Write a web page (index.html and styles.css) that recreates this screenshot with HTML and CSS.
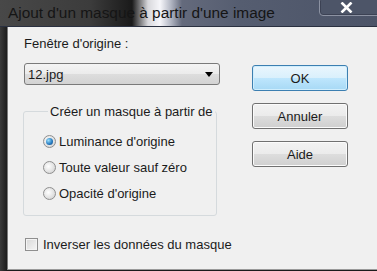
FILE: index.html
```html
<!DOCTYPE html>
<html>
  <head>
    <title>Ajout d'un masque</title>
    <link rel="stylesheet" href="styles.css">
  </head>
  <body>
    <div class="window">
      <div class="titlebar">
        <span class="title-text">Ajout d'un masque à partir d'une image</span>
        <div class="close-btn">
          <svg width="13" height="11" viewBox="0 0 13 11">
            <path d="M1.5 0.5 L11.5 10.5 M11.5 0.5 L1.5 10.5" stroke="#fff" stroke-width="2.6" />
          </svg>
        </div>
      </div>

      <div class="frame">
        <div class="client">
          <div class="left-col">
            <div class="label">Fenêtre d'origine :</div>
            <div class="select">
              <span>12.jpg</span>
              <span class="arrow"></span>
            </div>

            <fieldset class="group">
              <legend>Créer un masque à partir de</legend>
              <div class="radio-row">
                <span class="radio checked"></span>
                <span>Luminance d'origine</span>
              </div>
              <div class="radio-row">
                <span class="radio"></span>
                <span>Toute valeur sauf zéro</span>
              </div>
              <div class="radio-row">
                <span class="radio"></span>
                <span>Opacité d'origine</span>
              </div>
            </fieldset>

            <div class="check-row">
              <span class="checkbox"></span>
              <span>Inverser les données du masque</span>
            </div>
          </div>

          <div class="right-col">
            <button class="button primary">OK</button>
            <button class="button">Annuler</button>
            <button class="button">Aide</button>
          </div>
        </div>
      </div>
    </div>
  </body>
</html>
```

FILE: styles.css
```css
:root {
  --client-bg: #f0f0f0;
  --text: #1b1b1b;
  --frame-dark: #2c2c2c;
}

body {
  margin: 0;
  font-family: 'Liberation Sans', Arial, sans-serif;
  background: #1f2430;
}

.window {
  width: 377px;
  height: 271px;
  overflow: hidden;
  display: flex;
  flex-direction: column;
}

/* Title bar */
.titlebar {
  height: 26px;
  flex-shrink: 0;
  display: flex;
  align-items: flex-start;
  border-bottom: 1px solid #2a3040;
  background: linear-gradient(to right, #484848 0, #3c3c3c 90px, #1a1a1a 132px, #d8d8dc 148px, #f6f6fa 160px, #b8bcc8 170px, #646a7c 182px, #555d70 240px, #4c5468 100%);
}

.title-text {
  font-size: 15.4px;
  color: #151515;
  padding: 4px 0 0 8px;
  white-space: nowrap;
}

.close-btn {
  margin-left: auto;
  margin-right: -6px;
  width: 62px;
  height: 15px;
  margin-top: -3px;
  border: 1px solid #8c92a2;
  border-radius: 4px;
  box-shadow: inset 0 0 0 1px #3c4254;
  background: #4d5568;
  display: flex;
  justify-content: center;
  align-items: flex-end;
  padding-bottom: 2px;
}

.close-btn svg {
  margin-right: 9px;
}

/* Body */
.frame {
  flex: 1;
  display: flex;
  padding-left: 7px;
  background: linear-gradient(to right, #3a3a3a 0, #1c1c1c 7px);
  padding-bottom: 1px;
}

.client {
  flex: 1;
  background: var(--client-bg);
  border-left: 1px solid #7a7a7a;
  border-bottom: 1px solid #9a9a9a;
  display: flex;
  gap: 32px;
  padding: 9px 0 0 16px;
  color: var(--text);
  font-size: 13px;
}

.left-col {
  width: 196px;
  display: flex;
  flex-direction: column;
}

.label {
  line-height: 15px;
}

.select {
  margin-top: 12px;
  height: 20px;
  border: 1px solid #7a7a7a;
  border-radius: 3px;
  background: linear-gradient(#f4f4f4, #ebebeb 50%, #dddddd 51%, #d3d3d3);
  display: flex;
  align-items: center;
  justify-content: space-between;
  padding: 0 6px 0 3px;
  font-size: 13px;
}

.arrow {
  width: 0;
  height: 0;
  border-left: 4px solid transparent;
  border-right: 4px solid transparent;
  border-top: 5px solid #000;
}

/* Group box */
.group {
  margin: 19px 0 0 -1px;
  width: 194px;
  box-sizing: border-box;
  height: 112px;
  border: 1px solid #d5dadd;
  border-radius: 3px;
  padding: 15px 0 0 19px;
  display: flex;
  flex-direction: column;
  gap: 11px;
}

.group legend {
  padding: 0 2px;
  margin-left: 5px;
  line-height: 15px;
}

.radio-row,
.check-row {
  display: flex;
  align-items: center;
  gap: 3px;
  line-height: 15px;
  white-space: nowrap;
}

.radio {
  width: 11px;
  height: 11px;
  flex-shrink: 0;
  border: 1px solid #8f8f8f;
  border-radius: 50%;
  background: radial-gradient(circle at 40% 40%, #ffffff, #e0e0e0 60%, #c8c8c8);
  position: relative;
}

.radio.checked::after {
  content: '';
  position: absolute;
  left: 2px;
  top: 2px;
  width: 7px;
  height: 7px;
  border-radius: 50%;
  background: radial-gradient(circle at 35% 35%, #9ce0fb, #2a7fc4 55%, #0d3f7a);
}

/* Checkbox */
.check-row {
  margin-top: 21px;
  margin-left: 1px;
  gap: 5px;
}

.checkbox {
  width: 11px;
  height: 11px;
  flex-shrink: 0;
  border: 1px solid #8f8f8f;
  background: linear-gradient(135deg, #d8d8d8, #f6f6f6);
  box-shadow: inset 0 0 0 1px #f4f4f4;
}

/* Buttons */
.right-col {
  width: 96px;
  display: flex;
  flex-direction: column;
  gap: 12px;
  padding-top: 29px;
}

.button {
  height: 26px;
  border: 1px solid #707070;
  border-radius: 3px;
  font-family: 'Liberation Sans', Arial, sans-serif;
  font-size: 13px;
  color: var(--text);
  background: linear-gradient(#f2f2f2, #ebebeb 50%, #dddddd 51%, #cfcfcf);
  box-shadow: inset 0 0 0 1px #fbfbfb;
  padding: 0;
}

.button.primary {
  border-color: #3c7fb1;
  background: linear-gradient(#eaf6fd, #d9f0fc 50%, #bee6fd 51%, #a7d9f5);
  box-shadow: inset 0 0 0 1px #d0eefd;
}
```
